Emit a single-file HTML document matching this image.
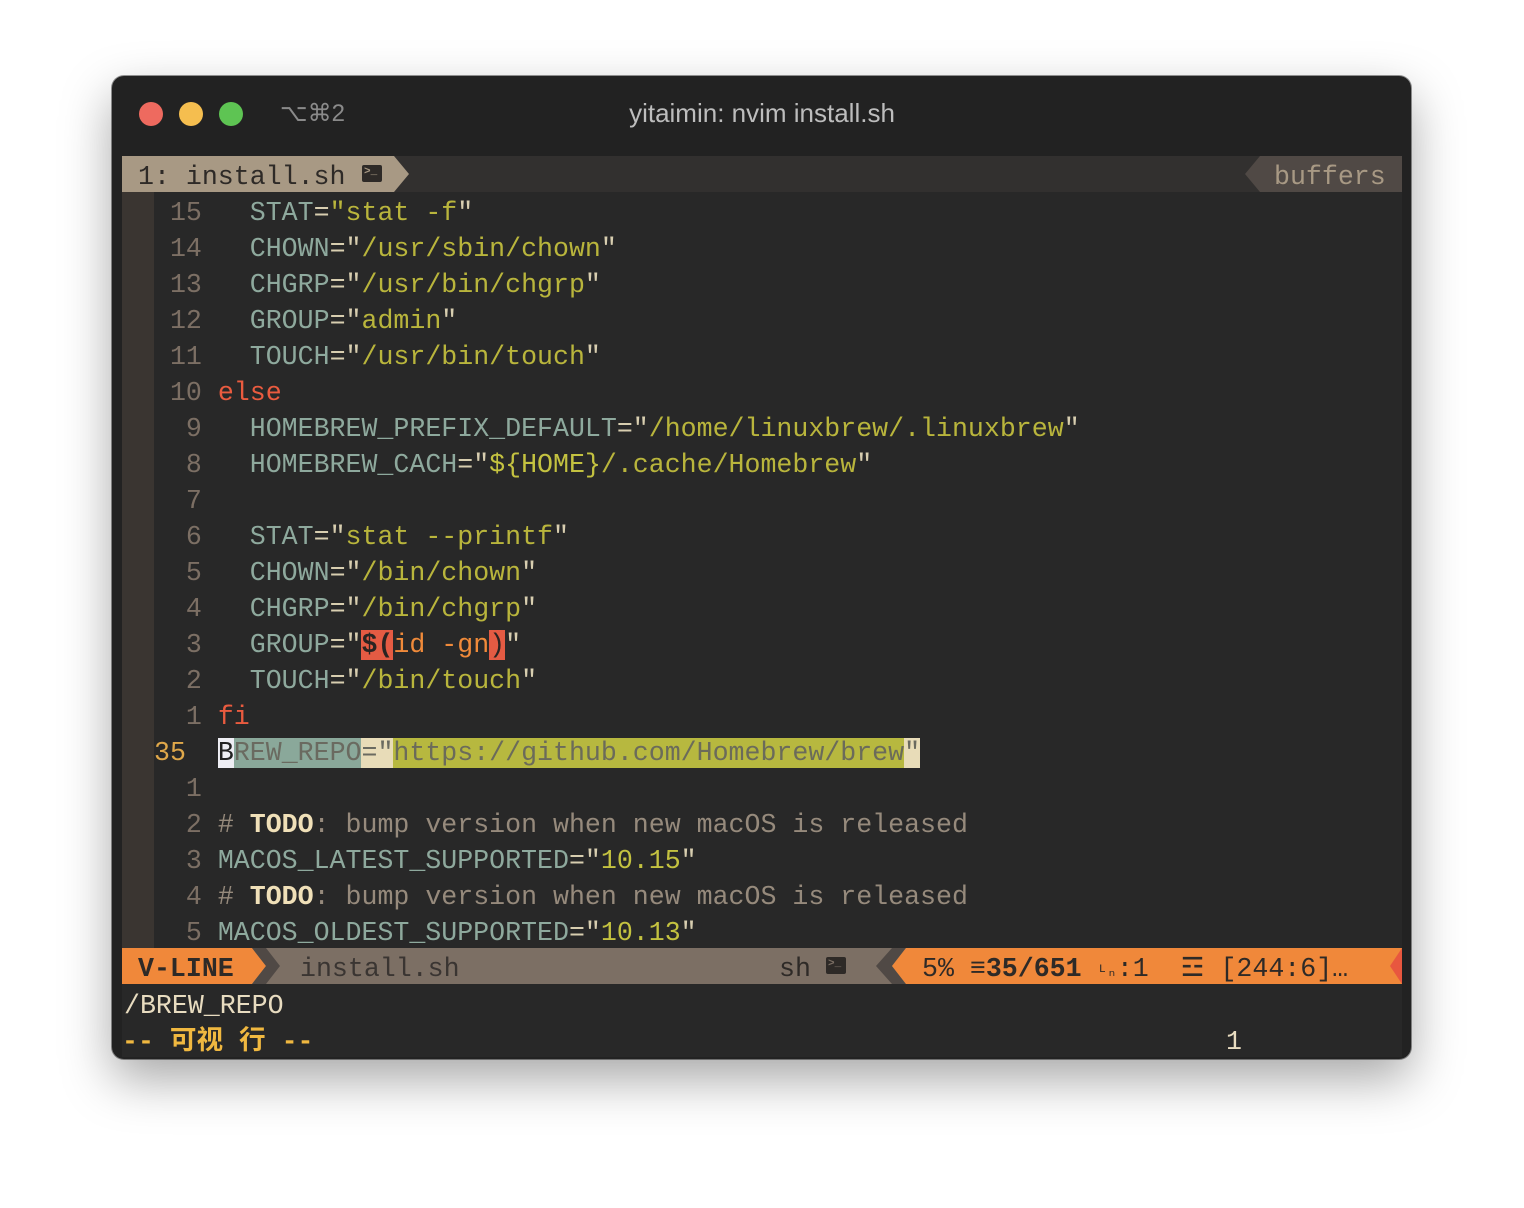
<!DOCTYPE html>
<html><head><meta charset="utf-8"><style>
body{margin:0;width:1524px;height:1208px;background:#fff;position:relative;overflow:hidden}
.win{position:absolute;left:112px;top:76px;width:1299px;height:983px;background:#222;border-radius:12px;box-shadow:0 20px 50px rgba(0,0,0,.35),0 0 0 1px rgba(0,0,0,.4);overflow:hidden}
.dot{position:absolute;top:102px;width:24px;height:24px;border-radius:50%}
.mono{font-family:"Liberation Mono","Noto Sans CJK SC",monospace;font-size:26.6px;line-height:36px;white-space:pre}
.ab{position:absolute}
.i{color:#8ea99d}.s{color:#b9b53c}.q{color:#d8ceb0}.c{color:#968a7c}.t{color:#f0e0b8;font-weight:bold}.n{color:#c4c240}.k{color:#ea5b3f}.ln{color:#7c6f64}
</style></head><body>
<div class="win"></div>
<div class="dot" style="left:139px;background:#ee6a5f"></div>
<div class="dot" style="left:179px;background:#f5be4f"></div>
<div class="dot" style="left:219px;background:#5ec453"></div>
<div class="ab" style="left:280px;top:99px;font:24px 'Liberation Sans','DejaVu Sans',sans-serif;color:#8a8a8a">⌥⌘2</div>
<div class="ab" style="left:0;width:1524px;top:98px;text-align:center;font:26px 'Liberation Sans',sans-serif;color:#bdbdbd">yitaimin: nvim install.sh</div>
<div class="ab" style="left:122px;top:156px;width:1280px;height:901px;background:#282828"></div>
<div class="ab" style="left:122px;top:156px;width:1280px;height:36px;background:#32302f"></div>
<div class="ab" style="left:122px;top:192px;width:32px;height:756px;background:#3a3531"></div>
<div class="ab" style="left:122px;top:156px;width:272px;height:36px;background:#a89984"></div>
<div class="ab" style="left:394px;top:156px;width:0;height:0;border-top:18px solid transparent;border-bottom:18px solid transparent;border-left:15px solid #a89984"></div>
<div class="ab mono" style="left:138px;top:159px;color:#2e2a27">1: install.sh</div>
<div class="ab" style="left:362px;top:165px;width:20px;height:17px;background:#2e2a27;border-radius:2px;color:#a89984;font:bold 11px 'Liberation Mono';line-height:15px;padding-left:2px;box-sizing:border-box">&gt;_</div>
<div class="ab" style="left:1260px;top:156px;width:142px;height:36px;background:#504945"></div>
<div class="ab" style="left:1245px;top:156px;width:0;height:0;border-top:18px solid transparent;border-bottom:18px solid transparent;border-right:15px solid #504945"></div>
<div class="ab mono" style="left:1274px;top:159px;color:#a89984">buffers</div>
<div class="ab mono" style="left:154px;top:195px;color:#d8ceb0"><span class="ln"> 15 </span>  <span class="i">STAT</span>=<span class="s">"stat -f</span>"
<span class="ln"> 14 </span>  <span class="i">CHOWN</span>="<span class="s">/usr/sbin/chown</span>"
<span class="ln"> 13 </span>  <span class="i">CHGRP</span>="<span class="s">/usr/bin/chgrp</span>"
<span class="ln"> 12 </span>  <span class="i">GROUP</span>="<span class="s">admin</span>"
<span class="ln"> 11 </span>  <span class="i">TOUCH</span>="<span class="s">/usr/bin/touch</span>"
<span class="ln"> 10 </span><span class="k">else</span>
<span class="ln">  9 </span>  <span class="i">HOMEBREW_PREFIX_DEFAULT</span>="<span class="s">/home/linuxbrew/.linuxbrew</span>"
<span class="ln">  8 </span>  <span class="i">HOMEBREW_CACH</span>="<span class="n">${HOME}</span><span class="s">/.cache/Homebrew</span>"
<span class="ln">  7 </span>
<span class="ln">  6 </span>  <span class="i">STAT</span>="<span class="s">stat --printf</span>"
<span class="ln">  5 </span>  <span class="i">CHOWN</span>="<span class="s">/bin/chown</span>"
<span class="ln">  4 </span>  <span class="i">CHGRP</span>="<span class="s">/bin/chgrp</span>"
<span class="ln">  3 </span>  <span class="i">GROUP</span>="<span style="background:#e45b43;color:#2a2422;font-weight:bold">$(</span><span style="color:#f08a3a">id -gn</span><span style="background:#e45b43;color:#2a2422">)</span>"
<span class="ln">  2 </span>  <span class="i">TOUCH</span>="<span class="s">/bin/touch</span>"
<span class="ln">  1 </span><span class="k">fi</span>
<span style="color:#e0a84a">35  </span><span style="background:#eeeef4;color:#222">B</span><span style="background:#8aa89a;color:#6a6a60">REW_REPO</span><span style="background:#e8dcb8;color:#6a6a60">="</span><span style="background:#b7b83f;color:#6b6b5a">https://github.com/Homebrew/brew</span><span style="background:#e8dcb8;color:#6a6a60">"</span>
<span class="ln">  1 </span>
<span class="ln">  2 </span><span class="c"># <span class="t">TODO</span>: bump version when new macOS is released</span>
<span class="ln">  3 </span><span class="i">MACOS_LATEST_SUPPORTED</span>="<span class="n">10.15</span>"
<span class="ln">  4 </span><span class="c"># <span class="t">TODO</span>: bump version when new macOS is released</span>
<span class="ln">  5 </span><span class="i">MACOS_OLDEST_SUPPORTED</span>="<span class="n">10.13</span>"</div>
<div class="ab" style="left:122px;top:948px;width:1280px;height:36px;background:#7c6f64"></div>
<div class="ab" style="left:122px;top:948px;width:130px;height:36px;background:#f0883a"></div>
<div class="ab" style="left:252px;top:948px;border-top:18px solid transparent;border-bottom:18px solid transparent;border-left:14px solid #f0883a"></div>
<div class="ab" style="left:252px;top:948px;width:28px;height:36px;background:#504945;clip-path:polygon(0 0,14px 0,28px 50%,14px 100%,0 100%,14px 50%)"></div>
<div class="ab mono" style="left:138px;top:951px;color:#2e2a27;font-weight:bold">V-LINE</div>
<div class="ab mono" style="left:300px;top:951px;color:#3a3532">install.sh</div>
<div class="ab mono" style="left:779px;top:951px;color:#2e2a27">sh</div>
<div class="ab" style="left:826px;top:957px;width:20px;height:17px;background:#2e2a27;border-radius:2px;color:#7c6f64;font:bold 11px 'Liberation Mono';line-height:15px;padding-left:2px;box-sizing:border-box">&gt;_</div>
<div class="ab" style="left:876px;top:948px;width:30px;height:36px;background:#504945;clip-path:polygon(16px 0,30px 0,16px 50%,30px 100%,16px 100%,0 50%)"></div>
<div class="ab" style="left:892px;top:948px;width:510px;height:36px;background:#f0883a;clip-path:polygon(14px 0,100% 0,100% 100%,14px 100%,0 50%)"></div>
<div class="ab" style="left:1390px;top:948px;width:12px;height:36px;background:#e8573f;clip-path:polygon(12px 0,12px 100%,0 50%)"></div>
<div class="ab mono" style="left:922px;top:951px;color:#2e2a27">5% <b>≡35/651</b> <span style="font-size:16px">ᴸₙ</span>:1  ☲ [244:6]…</div>
<div class="ab mono" style="left:124px;top:988px;color:#e8dcc0">/BREW_REPO</div>
<div class="ab mono" style="left:122px;top:1024px;color:#f0b840;font-weight:bold">-- 可视 行 --</div>
<div class="ab mono" style="left:1226px;top:1024px;color:#e8dcc0">1</div>
</body></html>
